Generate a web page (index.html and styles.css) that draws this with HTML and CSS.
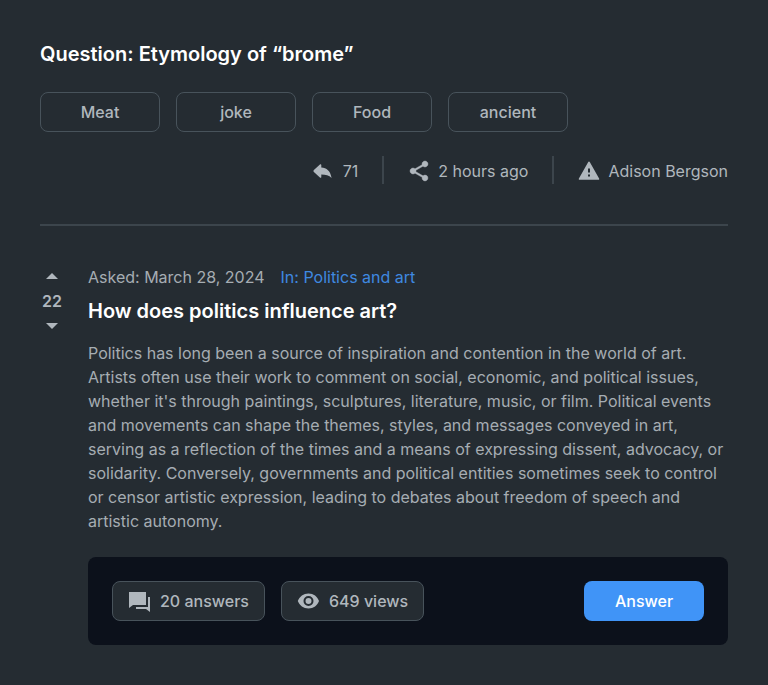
FILE: index.html
```html
<!DOCTYPE html>
<html lang="en">
<head>
<meta charset="utf-8">
<meta name="viewport" content="width=device-width, initial-scale=1">
<title>Question: Etymology of “brome”</title>
<link rel="stylesheet" href="styles.css">
</head>
<body>
<main class="page">
  <header class="topic">
    <h1 class="title">Question: Etymology of “brome”</h1>
    <div class="tags">
      <button class="tag" type="button">Meat</button>
      <button class="tag" type="button">joke</button>
      <button class="tag" type="button">Food</button>
      <button class="tag" type="button">ancient</button>
    </div>
    <div class="meta">
      <span class="meta-item"><svg class="icon" viewBox="0 0 22 22" aria-hidden="true"><path d="M8.300 5v2.600c5.400.2 9 3.400 10.300 10.400-2.600-2.600-5.800-3.400-10.300-3.400v2.300c0 .9-.8 1.100-1.400.6L.9 11.900c-.6-.5-.6-1.300 0-1.800l6-5.700c.6-.5 1.400-.3 1.400.6z"/></svg>71</span>
      <span class="meta-item"><svg class="icon" viewBox="1 1 22 22" aria-hidden="true"><path d="M18 16.080c-.76 0-1.440.3-1.960.77L8.910 12.700c.05-.23.09-.46.09-.7s-.04-.47-.09-.7l7.050-4.110c.54.5 1.250.81 2.040.81 1.660 0 3-1.340 3-3s-1.340-3-3-3-3 1.340-3 3c0 .24.04.47.09.7L8.040 9.810C7.500 9.310 6.790 9 6 9c-1.660 0-3 1.340-3 3s1.340 3 3 3c.79 0 1.500-.31 2.040-.81l7.120 4.160c-.05.21-.08.43-.08.65 0 1.610 1.310 2.920 2.920 2.920s2.920-1.310 2.920-2.920-1.310-2.920-2.920-2.920z" stroke="currentColor" stroke-width=".4"/></svg>2 hours ago</span>
      <span class="meta-item"><svg class="icon" viewBox="0 0 22 22" aria-hidden="true"><path fill-rule="evenodd" d="M11.900 2.200l9.200 16.300c.4.700 0 1.300-.7 1.300H1.600c-.7 0-1.100-.6-.7-1.300l9.200-16.300c.4-.8 1.400-.8 1.800 0zM10 8.500v4h2v-4zM10 14.500v2h2v-2z"/></svg>Adison Bergson</span>
    </div>
  </header>
  <article class="question">
    <div class="votes">
      <button class="vote" type="button" aria-label="Vote up"><svg class="arrow" viewBox="0 0 24 24" aria-hidden="true"><path d="M6 14l6-6 6 6z"/></svg></button>
      <span class="score">22</span>
      <button class="vote" type="button" aria-label="Vote down"><svg class="arrow" viewBox="0 0 24 24" aria-hidden="true"><path d="M6 10l6 6 6-6z"/></svg></button>
    </div>
    <div class="content">
      <div class="byline"><span>Asked: March 28, 2024</span><a class="category" href="#">In: Politics and art</a></div>
      <h2 class="title">How does politics influence art?</h2>
      <p class="text">Politics has long been a source of inspiration and contention in the world of art. Artists often use their work to comment on social, economic, and political issues, whether it's through paintings, sculptures, literature, music, or film. Political events and movements can shape the themes, styles, and messages conveyed in art, serving as a reflection of the times and a means of expressing dissent, advocacy, or solidarity. Conversely, governments and political entities sometimes seek to control or censor artistic expression, leading to debates about freedom of speech and artistic autonomy.</p>
      <footer class="actions">
        <button class="stat" type="button"><svg class="icon" viewBox="0 0 22 22" aria-hidden="true"><path d="M1 2h17v13H5l-4 3zM20 7h2v15l-4-3H8v-2h12z"/></svg>20 answers</button>
        <button class="stat" type="button"><svg class="icon" viewBox="0 1 22 22" aria-hidden="true"><path fill-rule="evenodd" d="M11.500 4.500C6.500 4.500 2.500 7.600.8 12c1.700 4.400 5.700 7.500 10.700 7.500s9-3.100 10.500-7.500c-1.500-4.400-5.500-7.500-10.500-7.500zM11.500 17a5 5 0 1 1 0-10 5 5 0 0 1 0 10zm0-8a3 3 0 1 0 0 6 3 3 0 0 0 0-6z"/></svg>649 views</button>
        <button class="answer" type="button">Answer</button>
      </footer>
    </div>
  </article>
</main>
</body>
</html>
```
FILE: styles.css
```css
* {
  box-sizing: border-box;
}

body {
  margin: 0;
  background: #252c32;
  color: #b0b7bd;
  font: 400 16px/24px Inter, sans-serif;
}

button {
  font: inherit;
  color: inherit;
  background: none;
  border: 0;
  padding: 0;
  cursor: pointer;
}

.page {
  padding: 40px;
}

.topic {
  padding-bottom: 40px;
  border-bottom: 2px solid #3c454c;
}

.title {
  margin: 0;
  color: #fff;
  font-size: 20px;
  line-height: 28px;
  font-weight: 600;
}

.tags {
  display: flex;
  flex-wrap: wrap;
  gap: 16px;
  margin-top: 24px;
}

.tag,
.stat {
  height: 40px;
  border: 1px solid #48535b;
  border-radius: 8px;
  font-weight: 500;
}

.tag {
  width: 120px;
}

.meta {
  display: flex;
  justify-content: flex-end;
  margin-top: 24px;
}

.meta-item {
  display: flex;
  align-items: center;
  gap: 8px;
  height: 28px;
  padding-top: 2px;
}

.meta-item + .meta-item {
  margin-left: 24px;
  padding-left: 24px;
  border-left: 2px solid #3c454c;
}

.icon,
.arrow {
  display: block;
  flex: none;
  width: 22px;
  height: 22px;
  fill: currentColor;
}

.arrow {
  width: 24px;
  height: 24px;
}

.question {
  display: flex;
  gap: 24px;
  margin-top: 39px;
}

.votes {
  display: flex;
  flex-direction: column;
  align-items: center;
  width: 24px;
}

.score {
  font-weight: 600;
}

.content {
  flex: 1;
  min-width: 0;
}

.byline {
  display: flex;
  gap: 16px;
  margin-bottom: 8px;
}

.category {
  color: #3f89e0;
  text-decoration: none;
}

.text {
  margin: 16px 0 24px;
}

.byline,
.text {
  color: #a6adb3;
}

.actions {
  display: flex;
  gap: 16px;
  padding: 24px;
  border-radius: 8px;
  background: #0c111b;
}

.stat {
  display: flex;
  align-items: center;
  gap: 10px;
  padding: 0 15px;
  background: #252c32;
}

.answer {
  width: 120px;
  height: 40px;
  margin-left: auto;
  border-radius: 8px;
  background: #4094f7;
  color: #fff;
  font-weight: 500;
}
```
